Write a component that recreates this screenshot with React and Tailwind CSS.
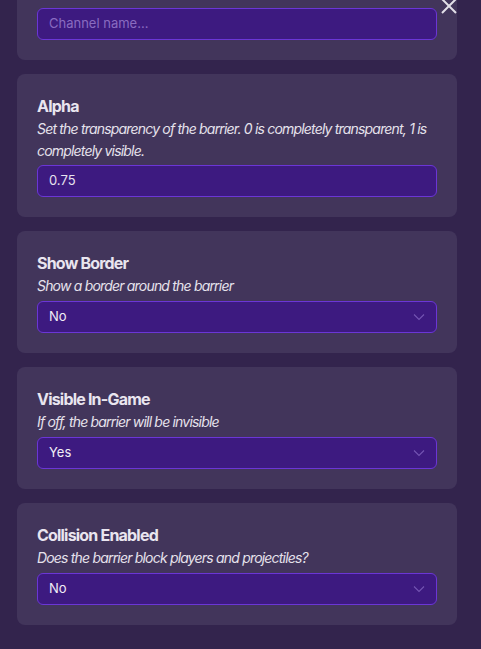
import React from "react";

const fields = [
  {
    title: "Alpha",
    desc: "Set the transparency of the barrier. 0 is completely transparent, 1 is completely visible.",
    type: "input",
    value: "0.75",
  },
  { title: "Show Border", desc: "Show a border around the barrier", type: "select", value: "No" },
  { title: "Visible In-Game", desc: "If off, the barrier will be invisible", type: "select", value: "Yes" },
  { title: "Collision Enabled", desc: "Does the barrier block players and projectiles?", type: "select", value: "No" },
];

const Chevron = () => (
  <svg width="12" height="8" viewBox="0 0 12 8" fill="none" className="shrink-0">
    <path d="M1 1.5 L6 6.5 L11 1.5" stroke="#7455b2" strokeWidth="1.1" />
  </svg>
);

const Field = ({ field }) => (
  <div className="rounded-lg bg-[#42355b] px-5 pt-5 pb-5">
    <div className="text-base leading-6 font-bold tracking-[-0.05em] text-[#e9e5ef]">{field.title}</div>
    <div className="text-sm leading-[22px] italic tracking-[-0.058em] text-[#e6e2ec]">{field.desc}</div>
    {field.type === "input" ? (
      <div className="mt-[3px] flex h-8 items-center rounded-md border border-[#6b36d6] bg-[#3d1a80] px-[11px] text-[13px] text-[#e6e2ee]">
        {field.value}
      </div>
    ) : (
      <div className="mt-1 flex h-8 items-center justify-between rounded-md border border-[#6b36d6] bg-[#3d1a80] pl-[11px] pr-[11px] text-[13px] text-[#f1eef6]">
        <span>{field.value}</span>
        <Chevron />
      </div>
    )}
  </div>
);

export default function App() {
  return (
    <div
      className="relative h-[649px] w-[481px] overflow-hidden bg-[#33244d]"
      style={{ fontFamily: "Inter, 'Noto Sans', sans-serif" }}
    >
      <div className="flex flex-col gap-[14px] pl-[17px] pr-[24px]">
        <div className="rounded-b-lg bg-[#42355b] px-5 pt-2 pb-5">
          <div className="flex h-8 items-center rounded-md border border-[#6b36d6] bg-[#3d1a80] px-[11px] text-[13px] text-[#8a6cc0]">
            Channel name...
          </div>
        </div>
        {fields.map((f, i) => (
          <Field key={i} field={f} />
        ))}
      </div>
      <svg className="absolute left-[440px] top-[-2px]" width="18" height="18" viewBox="0 0 18 18">
        <path d="M2 1 L16 15 M16 1 L2 15" stroke="#e2dfe8" strokeWidth="2" />
      </svg>
    </div>
  );
}
